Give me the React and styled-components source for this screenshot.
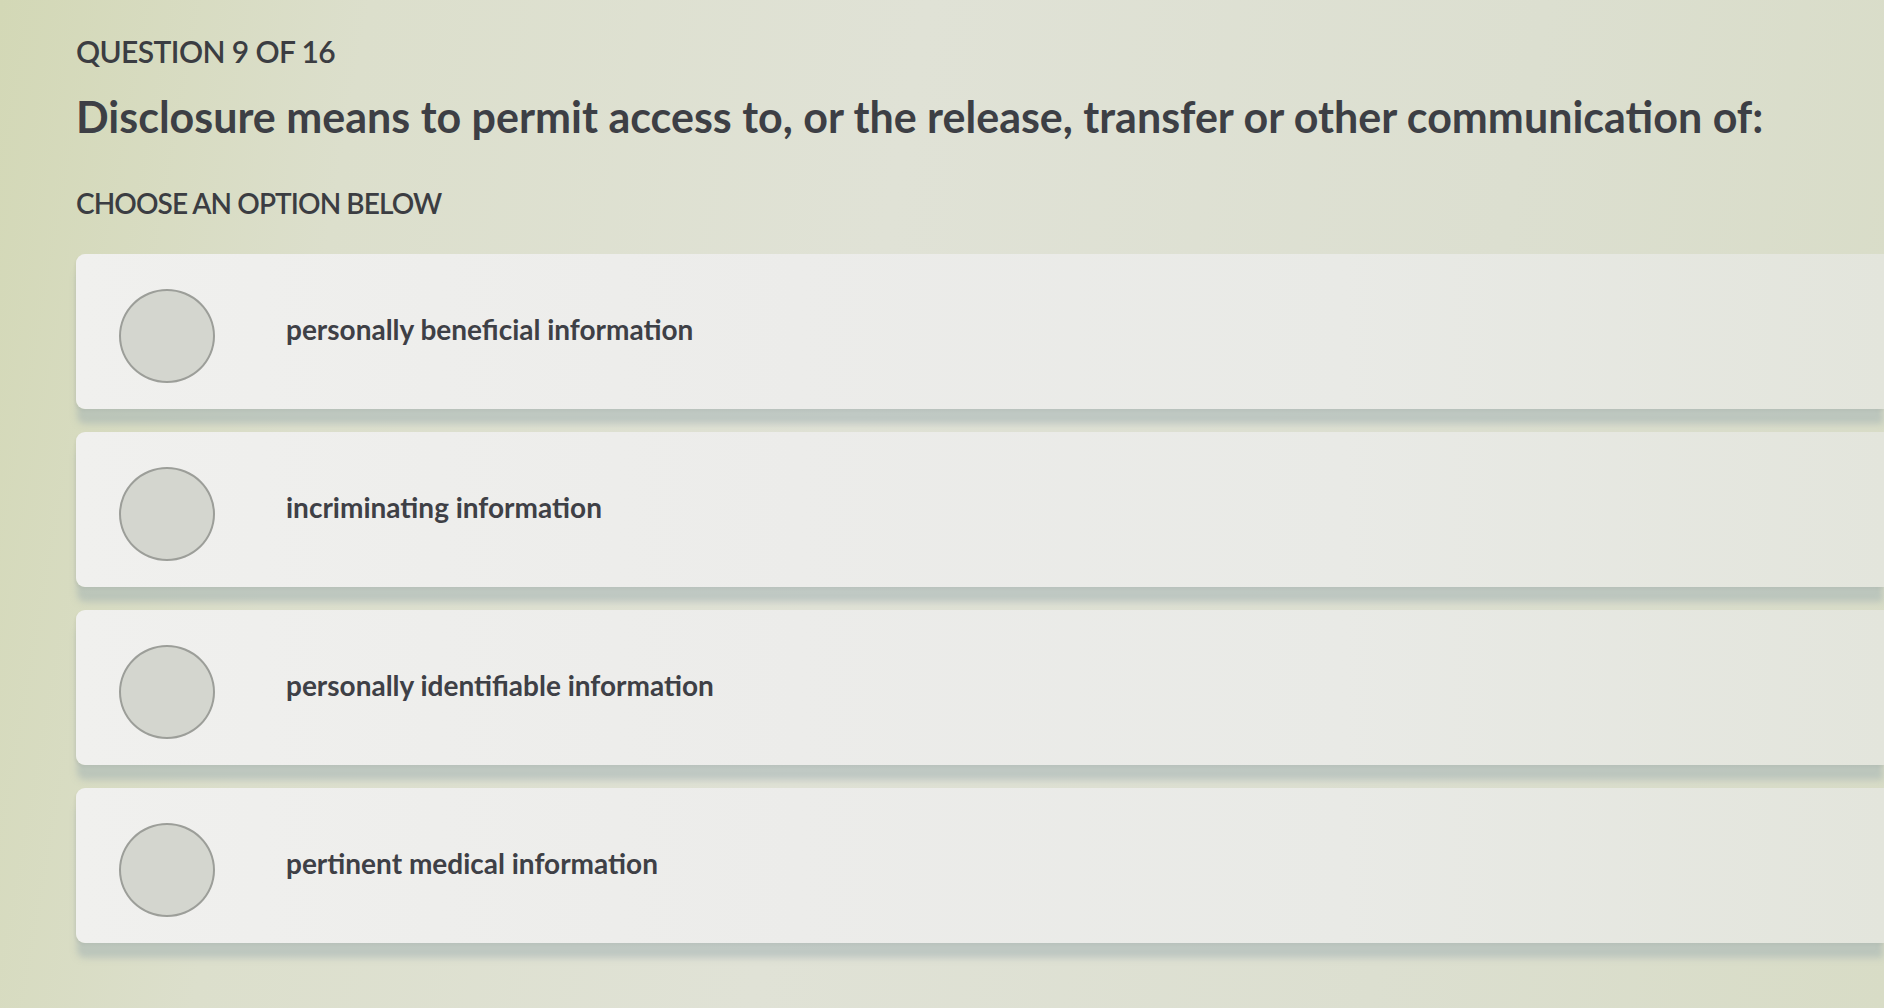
import React, { useState } from 'react';
import styled, { createGlobalStyle } from 'styled-components';

const GlobalStyle = createGlobalStyle`
  html, body {
    margin: 0;
    padding: 0;
    height: 100%;
  }
  body {
    font-family: Lato, "Open Sans", Arial, sans-serif;
    background: linear-gradient(100deg, #d3d8b6 0%, #dcdfcc 18%, #e0e2d6 45%, #dcdfd0 75%, #d8dcc6 100%);
    overflow: hidden;
  }
`;

const Page = styled.div`
  min-height: 1008px;
  box-sizing: border-box;
  padding: 33px 0 0 76px;
  display: flex;
  flex-direction: column;
`;

const Counter = styled.div`
  font-size: 30px;
  font-weight: 600;
  color: #3b3d42;
  letter-spacing: -0.6px;
`;

const Question = styled.h1`
  margin: 22px 0 0;
  font-size: 43px;
  font-weight: 700;
  color: #3d3f45;
`;

const Hint = styled.div`
  margin-top: 44px;
  font-size: 28px;
  font-weight: 600;
  color: #3b3d42;
  letter-spacing: -0.9px;
`;

const Options = styled.div`
  margin-top: 34px;
  display: flex;
  flex-direction: column;
  gap: 23px;
`;

const Card = styled.label`
  height: 155px;
  box-sizing: border-box;
  padding-left: 43px;
  display: flex;
  align-items: center;
  gap: 71px;
  border-radius: 9px 0 0 9px;
  background: linear-gradient(90deg, #f0f0ee 0%, #ececea 40%, #e9eae6 70%, #e3e5dc 100%);
  box-shadow: 0 16px 6px -1px rgba(160, 176, 178, 0.5), -1px 2px 3px rgba(0, 0, 0, 0.06);
  cursor: pointer;
`;

const Radio = styled.span`
  width: 96px;
  height: 94px;
  flex: none;
  margin-top: 8px;
  box-sizing: border-box;
  border-radius: 50%;
  border: 2px solid ${p => (p.$on ? '#5a6e8c' : '#9c9e99')};
  background: ${p => (p.$on ? '#bcc7d6' : '#d4d6cf')};
`;

const OptionText = styled.span`
  font-size: 28px;
  font-weight: 700;
  color: #3e4046;
  margin-top: -6px;
`;

const options = [
  'personally beneficial information',
  'incriminating information',
  'personally identifiable information',
  'pertinent medical information',
];

const App = () => {
  const [picked, setPicked] = useState(null);

  return (
    <>
      <GlobalStyle />
      <Page>
        <Counter>QUESTION 9 OF 16</Counter>
        <Question>Disclosure means to permit access to, or the release, transfer or other communication of:</Question>
        <Hint>CHOOSE AN OPTION BELOW</Hint>
        <Options>
          {options.map((text, i) => (
            <Card key={text} onClick={() => setPicked(i)}>
              <Radio $on={picked === i} />
              <OptionText>{text}</OptionText>
            </Card>
          ))}
        </Options>
      </Page>
    </>
  );
};

export default App;
